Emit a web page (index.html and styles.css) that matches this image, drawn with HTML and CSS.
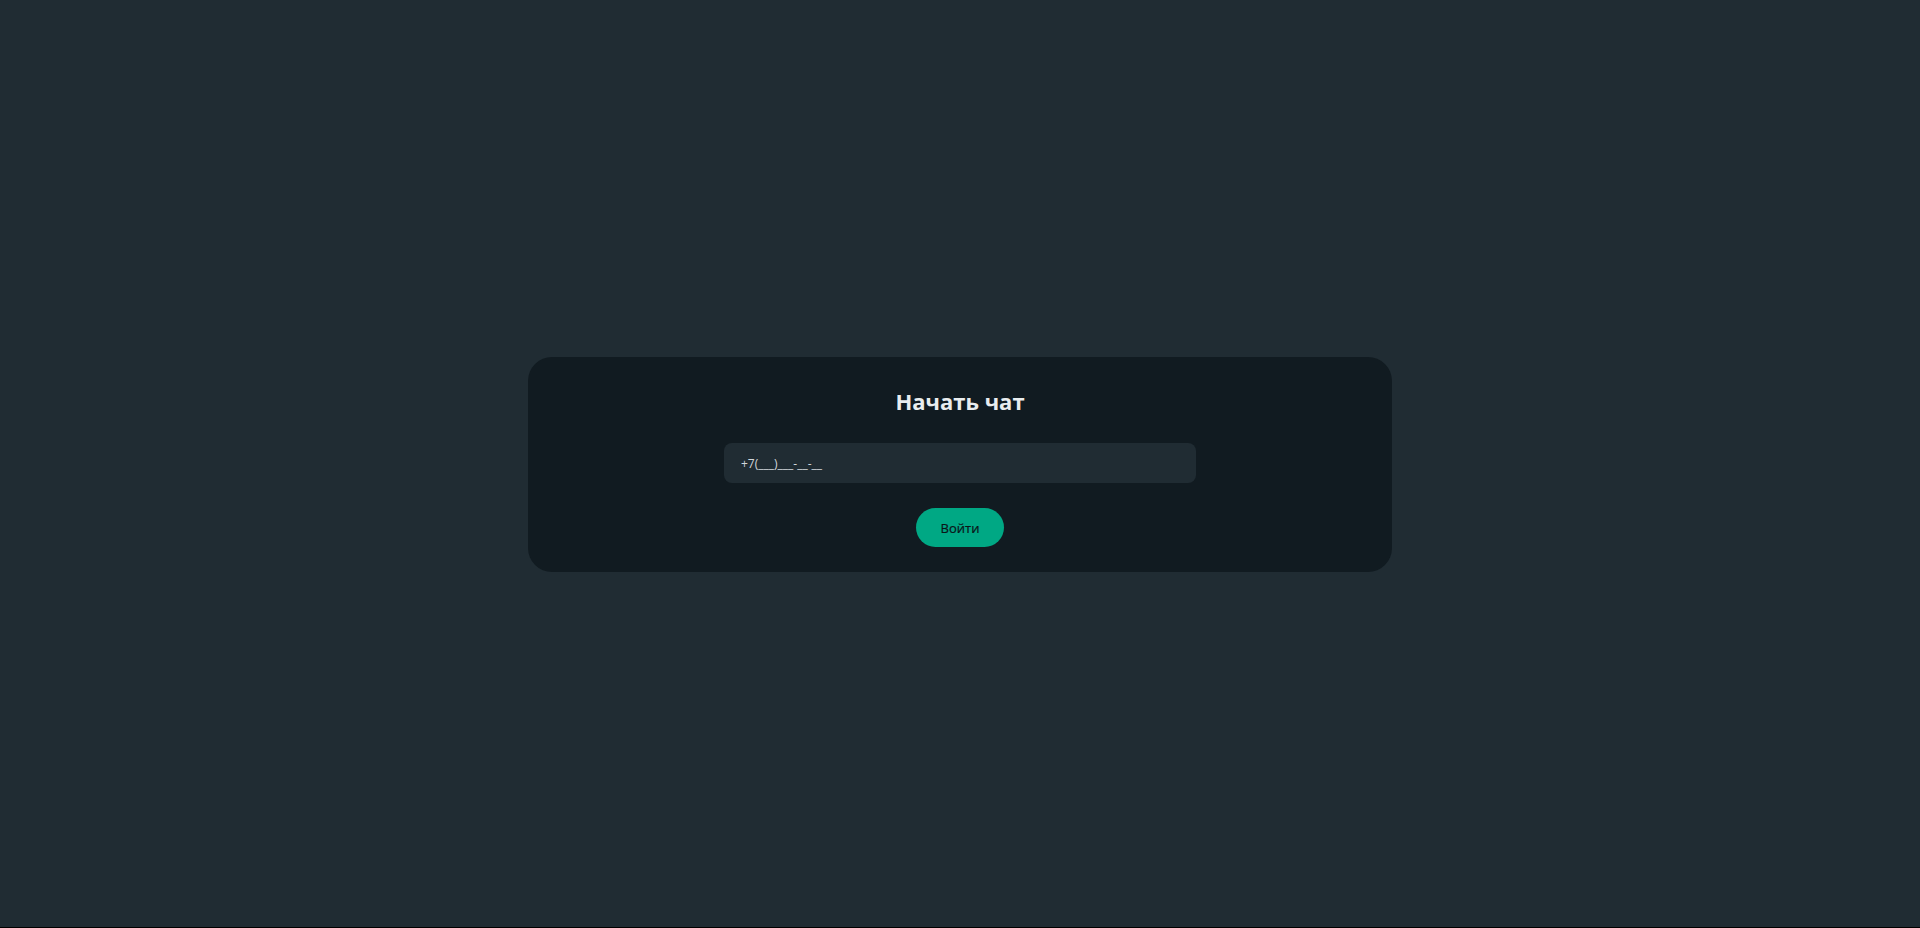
FILE: index.html
```html
<!DOCTYPE html>
<html lang="ru">
<head>
<meta charset="utf-8">
<title>Начать чат</title>
<link rel="stylesheet" href="styles.css">
</head>
<body>
<main class="page">
  <form class="card">
    <h1 class="title">Начать чат</h1>
    <input class="phone" type="text" value="+7(___)___-__-__">
    <button class="submit" type="button">Войти</button>
  </form>
</main>
</body>
</html>
```

FILE: styles.css
```css
html {
  margin: 0;
  padding: 0;
}
body {
  margin: 0;
  height: 100vh;
  box-sizing: border-box;
  border-bottom: 1px solid #000;
  background: #202c33;
  font-family: "Open Sans", "Noto Sans", sans-serif;
}
.page {
  height: 100%;
  box-sizing: border-box;
  padding-top: 2px;
  display: flex;
  align-items: center;
  justify-content: center;
}
.card {
  width: 864px;
  box-sizing: border-box;
  padding: 29px 0 25px;
  background: #111b21;
  border-radius: 24px;
  display: flex;
  flex-direction: column;
  align-items: center;
}
.title {
  margin: 0;
  font-size: 22px;
  line-height: 30px;
  font-weight: 700;
  color: #e9edef;
}
.phone {
  margin-top: 27px;
  width: 472px;
  height: 40px;
  box-sizing: border-box;
  border: none;
  outline: none;
  border-radius: 8px;
  background: #202c33;
  color: #d1d7db;
  font-family: "Open Sans", "Noto Sans", sans-serif;
  font-size: 12px;
  padding: 0 17px;
}
.submit {
  margin-top: 25px;
  width: 88px;
  height: 39px;
  border: none;
  border-radius: 20px;
  background: #00a884;
  color: #0b1418;
  font-family: "Open Sans", "Noto Sans", sans-serif;
  font-size: 13px;
  font-weight: 500;
  -webkit-text-stroke: 0.2px #0b1418;
  padding: 0;
  cursor: pointer;
}
```
